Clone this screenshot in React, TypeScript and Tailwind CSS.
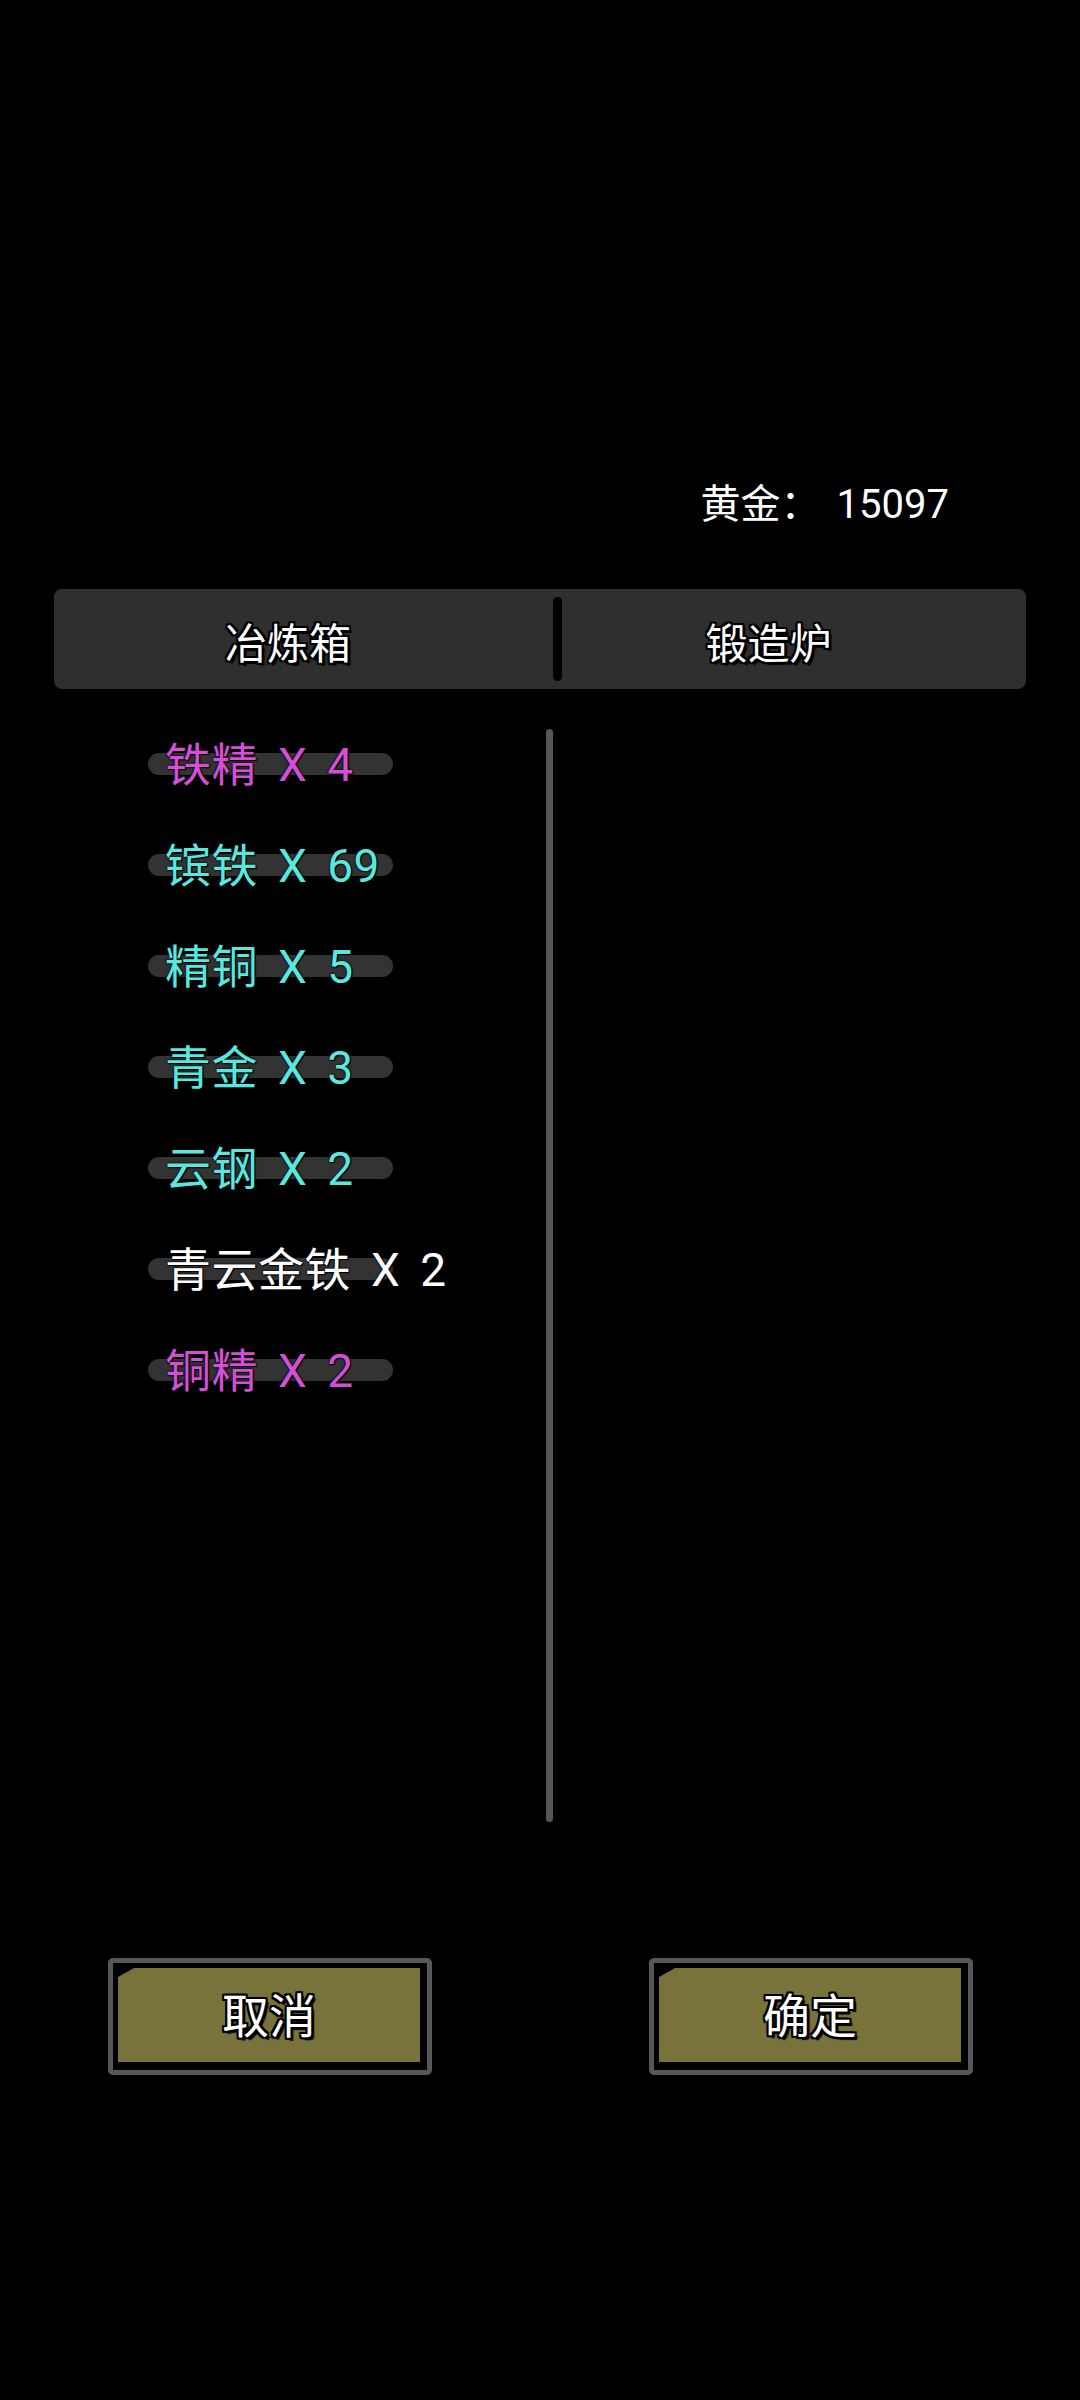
import React from "react";

const items: { name: string; color: string }[] = [
  { name: "铁精 X 4", color: "text-[#d24fd6]" },
  { name: "镔铁 X 69", color: "text-[#58e8e0]" },
  { name: "精铜 X 5", color: "text-[#58e8e0]" },
  { name: "青金 X 3", color: "text-[#58e8e0]" },
  { name: "云钢 X 2", color: "text-[#58e8e0]" },
  { name: "青云金铁 X 2", color: "text-white" },
  { name: "铜精 X 2", color: "text-[#d24fd6]" },
];

const stroke =
  "[text-shadow:2px_0_0_#000,-2px_0_0_#000,0_2px_0_#000,0_-2px_0_#000,2px_2px_0_#000,-2px_-2px_0_#000,2px_-2px_0_#000,-2px_2px_0_#000,3px_3px_1px_#000]";

function GameButton({ label }: { label: string }) {
  return (
    <div className="w-[324px] h-[117px] rounded-[5px] border-[5px] border-[#575757] bg-black pt-[5px] pl-[5px] pr-[7px] pb-[8px] flex">
      <div className="flex-1 bg-[#77733b] flex items-center justify-center pt-[2px] [clip-path:polygon(16px_0,100%_0,100%_100%,0_100%,0_9px)]">
        <span className={`text-[47px] leading-none text-white ${stroke}`}>{label}</span>
      </div>
    </div>
  );
}

export default function App() {
  return (
    <div
      className="w-[1080px] h-[2400px] bg-black flex flex-col"
      style={{ fontFamily: 'Roboto, "Noto Sans CJK SC", sans-serif' }}
    >
      {/* gold */}
      <div className="pt-[481px] flex justify-end pr-[131px]">
        <span className="text-[40px] leading-[48px] text-white whitespace-nowrap">
          黄金：<span className="ml-[16px]">15097</span>
        </span>
      </div>

      {/* tabs */}
      <div className="mt-[60px] mx-[54px] h-[100px] rounded-[8px] bg-[#2f2f2f] flex items-center">
        <div className="w-[499px] flex justify-center pr-[31px] pt-[12px]">
          <span className={`text-[42px] leading-none text-white ${stroke}`}>冶炼箱</span>
        </div>
        <div className="w-[9px] h-[84px] rounded-full bg-black" />
        <div className="flex-1 flex justify-center pr-[51px] pt-[12px]">
          <span className={`text-[42px] leading-none text-white ${stroke}`}>锻造炉</span>
        </div>
      </div>

      {/* list */}
      <div className="mt-[40px] flex h-[1093px]">
        <div className="w-[546px] pl-[148px] pt-[14px] flex flex-col gap-[57px]">
          {items.map((it) => (
            <div key={it.name} className="relative h-[44px] flex items-center">
              <div className="absolute left-0 top-[10px] w-[245px] h-[22px] rounded-full bg-[#333333]" />
              <span
                className={`relative pl-[17px] text-[46px] leading-[44px] whitespace-nowrap tracking-[0.5px] [word-spacing:8px] ${it.color} [text-shadow:0_0_2px_#000,0_0_2px_#000,1px_1px_1px_#000]`}
              >
                {it.name}
              </span>
            </div>
          ))}
        </div>
        <div className="w-[7px] h-[1093px] rounded-full bg-[#565656]" />
      </div>

      {/* buttons */}
      <div className="mt-[136px] flex pl-[108px] gap-[217px]">
        <GameButton label="取消" />
        <GameButton label="确定" />
      </div>
    </div>
  );
}
